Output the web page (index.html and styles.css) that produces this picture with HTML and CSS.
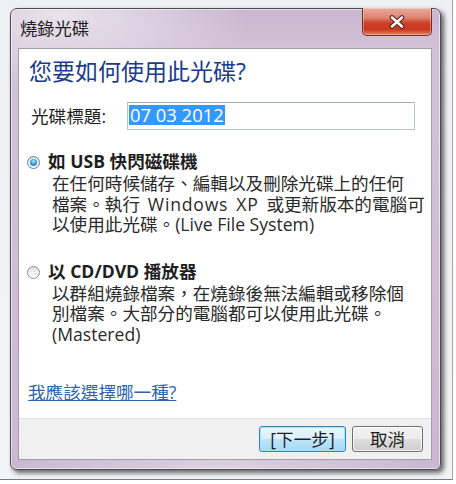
FILE: index.html
```html
<!DOCTYPE html>
<html lang="zh-Hant">
<head>
<meta charset="utf-8">
<title>燒錄光碟</title>
<link rel="stylesheet" href="styles.css">
</head>
<body>
<div class="frame">
  <div class="win">
    <div class="titlebar">
      <span class="title">燒錄光碟</span>
      <div class="close">
        <svg width="16" height="14" viewBox="0 0 16 14">
          <path d="M3 2.5 L13 11.5 M13 2.5 L3 11.5" stroke="#5b1c12" stroke-width="4.6" stroke-linecap="round" fill="none"/>
          <path d="M3 2.5 L13 11.5 M13 2.5 L3 11.5" stroke="#ffffff" stroke-width="2.6" stroke-linecap="round" fill="none"/>
        </svg>
      </div>
    </div>
    <div class="client">
      <div class="content">
        <h1 class="heading">您要如何使用此光碟?</h1>
        <div class="field">
          <span class="label">光碟標題:</span>
          <div class="input"><span class="sel">07 03 2012</span></div>
        </div>
        <div class="option first">
          <span class="radio checked"></span>
          <div class="otext">
            <div class="otitle">如 USB 快閃磁碟機</div>
            <div class="odesc">在任何時候儲存、編輯以及刪除光碟上的任何<br>檔案。執行<span class="wide"> Windows XP </span>或更新版本的電腦可<br>以使用此光碟。(Live File System)</div>
          </div>
        </div>
        <div class="option second">
          <span class="radio"></span>
          <div class="otext">
            <div class="otitle">以 CD/DVD 播放器</div>
            <div class="odesc">以群組燒錄檔案，在燒錄後無法編輯或移除個<br>別檔案。大部分的電腦都可以使用此光碟。<br>(Mastered)</div>
          </div>
        </div>
        <a class="link" href="#">我應該選擇哪一種?</a>
      </div>
      <div class="footer">
        <button class="btn default">[下一步]</button>
        <button class="btn">取消</button>
      </div>
    </div>
  </div>
</div>
</body>
</html>
```
FILE: styles.css
```css
html, body {
  margin: 0;
  padding: 0;
  background: #ffffff;
}
body {
  width: 456px;
  height: 484px;
  overflow: hidden;
  font-family: "Open Sans", "Noto Sans CJK TC", sans-serif;
  color: #1e1e1e;
}
.frame {
  box-sizing: border-box;
  width: 453px;
  height: 480px;
  padding: 8px 0 0 10px;
  background: linear-gradient(to bottom, #eef0f3 0, #f3f4f6 100%);
  border-right: 1px solid #a5a5a5;
  border-bottom: 1px solid #7a7a7a;
}
.win {
  box-sizing: border-box;
  width: 431px;
  height: 462px;
  border: 1px solid #4f4b52;
  border-radius: 7px 7px 6px 6px;
  background:
    radial-gradient(ellipse 190px 70px at 50px 6px, rgba(255,255,255,0.6), rgba(255,255,255,0) 100%),
    radial-gradient(ellipse 200px 30px at 210px 458px, rgba(255,255,255,0.35), rgba(255,255,255,0) 100%),
    linear-gradient(to bottom, #c9b6cf 0, #d3c3d8 45px, #cbb9d1 100%);
  box-shadow: inset 0 0 0 1px rgba(255,255,255,0.55), 3px 3px 5px rgba(0,0,0,0.6);
  display: flex;
  flex-direction: column;
}
.titlebar {
  height: 39px;
  display: flex;
  justify-content: space-between;
  align-items: flex-start;
  padding: 0 8px 0 9px;
}
.title {
  font-family: "Noto Sans CJK TC", sans-serif;
  font-size: 17.3px;
  line-height: 24px;
  margin-top: 7px;
  color: #1f1f22;
}
.close {
  box-sizing: border-box;
  width: 70px;
  height: 28px;
  margin-top: -1px;
  border: 1px solid #7e2a1d;
  border-top: none;
  border-radius: 0 0 5px 5px;
  background: linear-gradient(to bottom, #e9ab9c 0, #df8570 35%, #cc4128 55%, #c9381f 80%, #e2846b 100%);
  box-shadow: inset 0 0 0 1px rgba(255,255,255,0.35);
  display: flex;
  align-items: center;
  justify-content: center;
}
.close svg { display: block; }
.client {
  box-sizing: border-box;
  height: 412px;
  margin: 0 8px 0 7px;
  border: 1px solid #a49cab;
  background: #ffffff;
  display: flex;
  flex-direction: column;
}
.content {
  flex: 1;
  padding-top: 7px;
}
.heading {
  margin: 0 0 0 10px;
  font-size: 23px;
  line-height: 30px;
  font-weight: normal;
  color: #1b3b8c;
}
.field {
  display: flex;
  align-items: center;
  margin-top: 16px;
  padding-left: 12px;
}
.label {
  width: 96px;
  font-size: 17.6px;
  line-height: 28px;
}
.input {
  box-sizing: border-box;
  width: 288px;
  height: 28px;
  border: 1px solid #b9c4d0;
  border-top-color: #a3acb8;
  padding: 2px 0 0 1px;
  font-size: 18.4px;
  line-height: 20px;
}
.sel {
  display: inline-block;
  background: #3399ff;
  color: #ffffff;
  line-height: 20px;
  padding: 0 1px;
}
.option {
  display: flex;
  align-items: flex-start;
}
.option.first { margin-top: 19px; }
.option.second { margin-top: 24px; }
.radio {
  box-sizing: border-box;
  flex: none;
  width: 13px;
  height: 13px;
  margin: 7px 0 0 8px;
  border-radius: 50%;
  border: 1px solid #8d9091;
  background: linear-gradient(to bottom, #dcdcdc 0, #f4f4f4 60%, #ffffff 100%);
  position: relative;
}
.radio.checked {
  border-color: #5a7f9e;
}
.radio.checked::after {
  content: "";
  position: absolute;
  left: 2px;
  top: 2px;
  width: 7px;
  height: 7px;
  border-radius: 50%;
  background: radial-gradient(circle at 50% 35%, #b9ecff 0, #49a8e0 40%, #1d5e92 100%);
}
.otext {
  margin-left: 8px;
}
.otitle {
  font-size: 17.6px;
  line-height: 24px;
  font-weight: bold;
}
.odesc {
  padding-left: 4px;
  font-size: 17.6px;
  line-height: 20.5px;
  color: #2a2a2a;
}
.wide {
  letter-spacing: 0.8px;
  word-spacing: 2.5px;
}
.link {
  display: inline-block;
  margin: 36px 0 0 9px;
  font-size: 17.6px;
  line-height: 24px;
  color: #2b66ae;
  text-decoration: underline;
}
.footer {
  box-sizing: border-box;
  height: 41px;
  border-top: 1px solid #dfdfdf;
  background: #f0f0f0;
  display: flex;
  justify-content: flex-end;
  align-items: center;
  gap: 6px;
  padding-right: 8px;
}
.btn {
  box-sizing: border-box;
  height: 26px;
  width: 71px;
  padding: 0;
  border: 1px solid #707070;
  border-radius: 3px;
  background: linear-gradient(to bottom, #f2f2f2 0, #ebebeb 50%, #dddddd 51%, #cfcfcf 100%);
  box-shadow: inset 0 0 0 1px rgba(255,255,255,0.7);
  font-family: "Open Sans", "Noto Sans CJK TC", sans-serif;
  font-size: 17.6px;
  line-height: 22px;
  color: #1e1e1e;
}
.btn.default {
  width: 87px;
  border-color: #3c7fb1;
  background: linear-gradient(to bottom, #eaf6fd 0, #d9f0fc 50%, #bee6fd 51%, #a7d9f5 100%);
  box-shadow: inset 0 0 0 1px #9ee8fa;
}
```
